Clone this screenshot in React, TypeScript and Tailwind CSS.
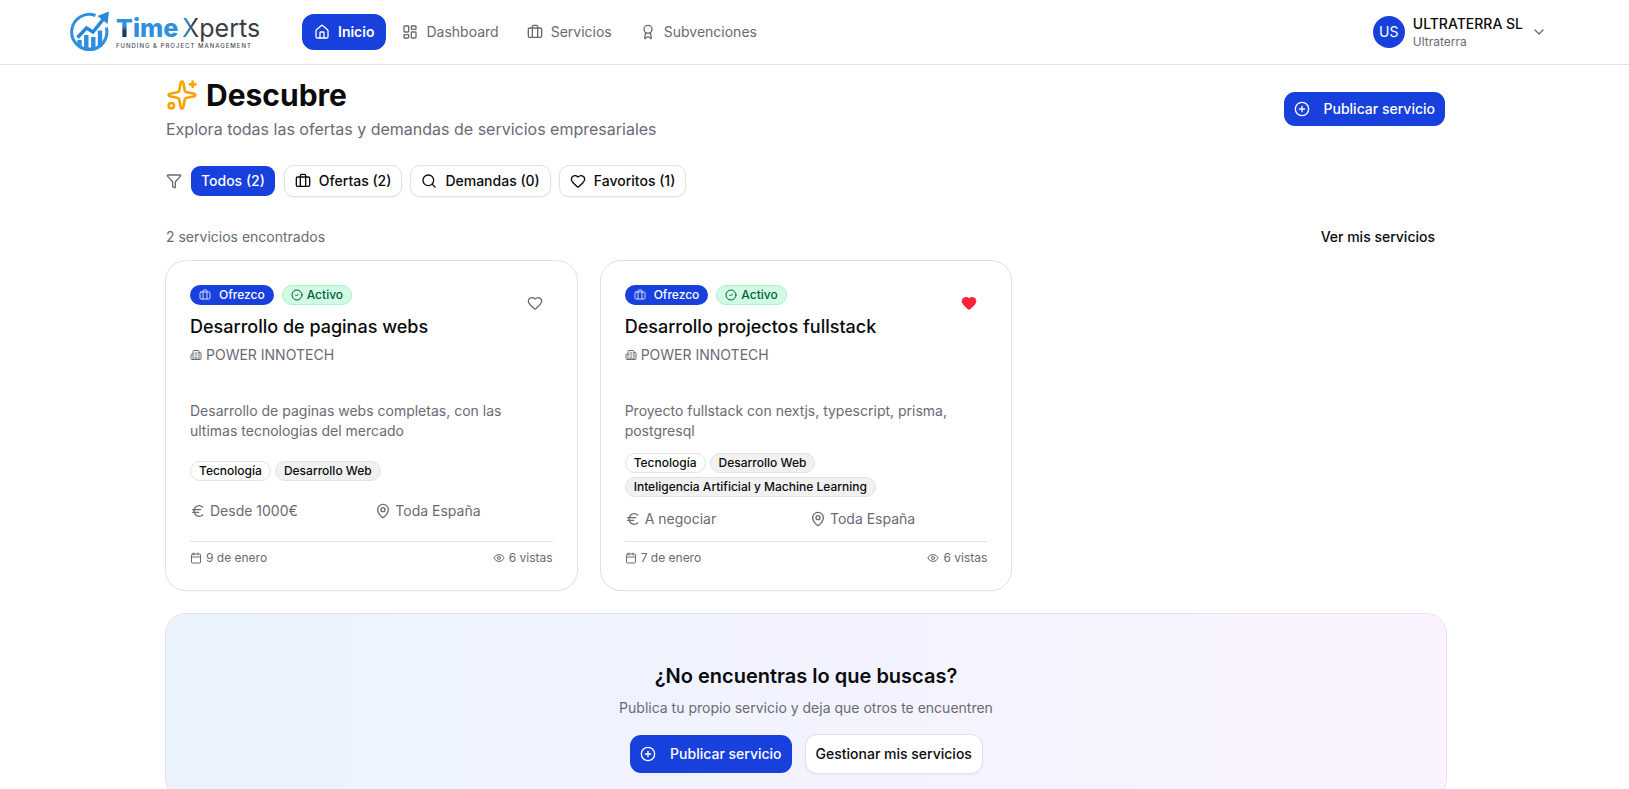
import type { ReactNode } from "react";
import {
  Award,
  Briefcase,
  Building2,
  Calendar,
  ChevronDown,
  CircleCheck,
  CirclePlus,
  Euro,
  Eye,
  Funnel,
  Heart,
  House,
  LayoutDashboard,
  MapPin,
  Search,
  Sparkles,
} from "lucide-react";
import clsx from "clsx";

function Logo() {
  return (
    <a href="#inicio" className="flex w-48 items-center gap-1.5" aria-label="Time Xperts">
      <svg viewBox="0 0 40 42" className="h-[42px] w-10" fill="none" aria-hidden="true">
        <path d="M25.500 4.500A17.600 17.600 0 1 0 36.300 16.500" stroke="#2f8fdf" strokeWidth="3" />
        <path d="M5 30.500C8 37 13 39.800 20 39.800S33 36.500 36 29c-4 5-9 7.500-16 7.500S9 35 5 30.500Z" fill="#2f8fdf" />
        <path d="M7.500 26.500 16.500 17l6.500 4L33.500 8" stroke="#2a86d8" strokeWidth="3.500" />
        <path d="m27.500 5 11.500-4.500-1.500 12.500z" fill="#2a86d8" />
        <path d="M9.500 29v6M16.300 24v15M23.300 26v13M30 19.500V36" stroke="#2f8fdf" strokeWidth="4.400" />
      </svg>
      <span className="flex flex-col">
        <span className="flex items-baseline gap-1 text-[25px] leading-7">
          <span className="font-extrabold text-[#2f8fdf]">
            <span className="bg-linear-to-b from-[#2f8fdf] from-45% to-[#1d3a5c] to-60% bg-clip-text text-transparent">T</span>ime
          </span>
          <span className="text-[#3a3d48]">
            <span className="bg-linear-to-r from-[#2f7fc8] from-30% to-[#3a3d48] to-70% bg-clip-text text-transparent">X</span>perts
          </span>
        </span>
        <span className="text-[6px] leading-2 font-medium tracking-[1px] whitespace-nowrap text-[#4a4d57]">FUNDING &amp; PROJECT MANAGEMENT</span>
      </span>
    </a>
  );
}

function NavItem({ icon, label, active }: { icon: ReactNode; label: string; active?: boolean }) {
  return (
    <a
      href={`#${label.toLowerCase()}`}
      className={clsx(
        "flex h-9 items-center gap-2 rounded-xl px-3 text-sm",
        active ? "bg-[#1740dc] font-semibold text-white" : "text-[#6a6a75]",
      )}
    >
      {icon}
      {label}
    </a>
  );
}

type ButtonProps = { variant: "primary" | "outline" | "ghost"; className: string; children: ReactNode };

function Button({ variant, className, children }: ButtonProps) {
  return (
    <button
      type="button"
      className={clsx(
        "flex items-center border bg-clip-padding px-2.5 text-sm font-medium",
        variant === "primary" && "border-transparent bg-[#1740dc] text-white",
        variant === "outline" && "border-[#e2e2e4] bg-white text-[#0b0b0d] shadow-xs",
        variant === "ghost" && "border-transparent text-[#0b0b0d]",
        className,
      )}
    >
      {children}
    </button>
  );
}

function Badge({ className, children }: { className: string; children: ReactNode }) {
  return (
    <span className={clsx("flex h-5 items-center rounded-full border px-2 text-xs font-medium", className)}>{children}</span>
  );
}

type Service = {
  title: string;
  company: string;
  description: string;
  category: string;
  tags: string[];
  price: string;
  date: string;
  favorite: boolean;
};

const services: Service[] = [
  {
    title: "Desarrollo de paginas webs",
    company: "POWER INNOTECH",
    description: "Desarrollo de paginas webs completas, con las ultimas tecnologias del mercado",
    category: "Tecnología",
    tags: ["Desarrollo Web"],
    price: "Desde 1000€",
    date: "9 de enero",
    favorite: false,
  },
  {
    title: "Desarrollo projectos fullstack",
    company: "POWER INNOTECH",
    description: "Proyecto fullstack con nextjs, typescript, prisma, postgresql",
    category: "Tecnología",
    tags: ["Desarrollo Web", "Inteligencia Artificial y Machine Learning"],
    price: "A negociar",
    date: "7 de enero",
    favorite: true,
  },
];

function ServiceCard({ service }: { service: Service }) {
  return (
    <article className="flex flex-col rounded-[20px] bg-white p-6 text-[#6a6a75] shadow-xs ring-1 ring-[#e2e2e4]">
      <header className="flex items-start justify-between">
        <div>
          <div className="mb-2 flex gap-2">
            <Badge className="gap-2 border-transparent bg-[#1740dc] text-white">
              <Briefcase className="size-3 opacity-80" />
              Ofrezco
            </Badge>
            <Badge className="gap-1 border-[#a4f4c8] bg-[#d2fbe3] text-[#006045]">
              <CircleCheck className="size-3" />
              Activo
            </Badge>
          </div>
          <h2 className="mb-1 text-lg leading-7 font-medium text-[#0b0b0d]">{service.title}</h2>
          <p className="flex items-center gap-1 text-sm">
            <Building2 className="size-3" />
            {service.company}
          </p>
        </div>
        <button type="button" aria-label="Favorito" aria-pressed={service.favorite} className="flex size-9 items-center justify-center">
          <Heart className={clsx("size-4", service.favorite && "fill-[#ff2436] text-[#ff2436]")} />
        </button>
      </header>
      <div className="mt-9 flex flex-1 flex-col justify-between gap-3">
        <p className="text-sm">{service.description}</p>
        <div className="flex flex-wrap gap-1">
          <Badge className="border-[#e2e2e4] text-[#0b0b0d]">{service.category}</Badge>
          {service.tags.map((tag) => (
            <Badge key={tag} className="border-[#e2e2e4] bg-[#f1f1f2] text-[#0b0b0d]">
              {tag}
            </Badge>
          ))}
        </div>
        <div className="grid grid-cols-2 gap-2 text-sm">
          <span className="flex items-center gap-1">
            <Euro className="size-4" />
            {service.price}
          </span>
          <span className="flex items-center gap-1">
            <MapPin className="size-4" />
            Toda España
          </span>
        </div>
        <footer className="flex justify-between border-t border-[#e2e2e4] pt-2 text-xs">
          <span className="flex items-center gap-1">
            <Calendar className="size-3" />
            {service.date}
          </span>
          <span className="flex items-center gap-1">
            <Eye className="size-3" />6 vistas
          </span>
        </footer>
      </div>
    </article>
  );
}

export default function App() {
  return (
    <div className="h-screen overflow-hidden bg-white font-['Inter',sans-serif] text-[#0b0b0d]">
      <header className="flex h-[65px] items-center border-b border-[#e2e2e4] pr-[72px] pl-[70px]">
        <Logo />
        <nav className="ml-10 flex gap-1">
          <NavItem active label="Inicio" icon={<House className="size-4" />} />
          <NavItem label="Dashboard" icon={<LayoutDashboard className="size-4" />} />
          <NavItem label="Servicios" icon={<Briefcase className="size-4" />} />
          <NavItem label="Subvenciones" icon={<Award className="size-4" />} />
        </nav>
        <button type="button" className="ml-auto flex items-center gap-2 px-2.5 text-left">
          <span className="flex size-8 items-center justify-center rounded-full bg-[#1740dc] text-sm text-white">US</span>
          <span className="flex flex-col">
            <span className="text-sm leading-5 font-medium">ULTRATERRA SL</span>
            <span className="text-xs leading-4 text-[#6a6a75]">Ultraterra</span>
          </span>
          <ChevronDown className="size-4 text-[#6a6a75]" />
        </button>
      </header>

      <main className="pr-[17px]">
        <div className="mx-auto max-w-7xl pt-3 pb-6">
          <div className="mb-6 flex items-center justify-between">
            <div>
              <h1 className="mb-1 flex items-center gap-2 text-3xl leading-9 font-bold">
                <Sparkles className="size-8 text-[#f7a400]" />
                Descubre
              </h1>
              <p className="text-base text-[#6a6a75]">Explora todas las ofertas y demandas de servicios empresariales</p>
            </div>
            <Button variant="primary" className="h-9 gap-3.5 rounded-xl">
              <CirclePlus className="size-4" />
              Publicar servicio
            </Button>
          </div>

          <div className="mb-6 flex items-center gap-2">
            <Funnel className="size-4 text-[#6a6a75]" />
            <Button variant="primary" className="h-8 rounded-[10px]">Todos (2)</Button>
            <Button variant="outline" className="h-8 gap-2 rounded-[10px]">
              <Briefcase className="size-4" />
              Ofertas (2)
            </Button>
            <Button variant="outline" className="h-8 gap-2 rounded-[10px]">
              <Search className="size-4" />
              Demandas (0)
            </Button>
            <Button variant="outline" className="h-8 gap-2 rounded-[10px]">
              <Heart className="size-4" />
              Favoritos (1)
            </Button>
          </div>

          <div className="mb-2 flex items-center justify-between">
            <p className="text-sm text-[#6a6a75]">2 servicios encontrados</p>
            <Button variant="ghost" className="h-8 rounded-[10px]">Ver mis servicios</Button>
          </div>

          <div className="grid grid-cols-3 gap-6">
            {services.map((service) => (
              <ServiceCard key={service.title} service={service} />
            ))}
          </div>

          <section className="mt-6 flex flex-col items-center rounded-[20px] bg-linear-to-r from-[#eaf3ff] to-[#faf3ff] pt-12 pb-6 shadow-xs ring-1 ring-[#e2e2e4]">
            <h2 className="mb-2 text-xl leading-7 font-semibold">¿No encuentras lo que buscas?</h2>
            <p className="mb-4 text-sm text-[#6a6a75]">Publica tu propio servicio y deja que otros te encuentren</p>
            <div className="flex gap-3">
              <Button variant="primary" className="h-10 gap-3.5 rounded-xl">
                <CirclePlus className="size-4" />
                Publicar servicio
              </Button>
              <Button variant="outline" className="h-10 rounded-xl">Gestionar mis servicios</Button>
            </div>
          </section>
        </div>
      </main>
    </div>
  );
}
